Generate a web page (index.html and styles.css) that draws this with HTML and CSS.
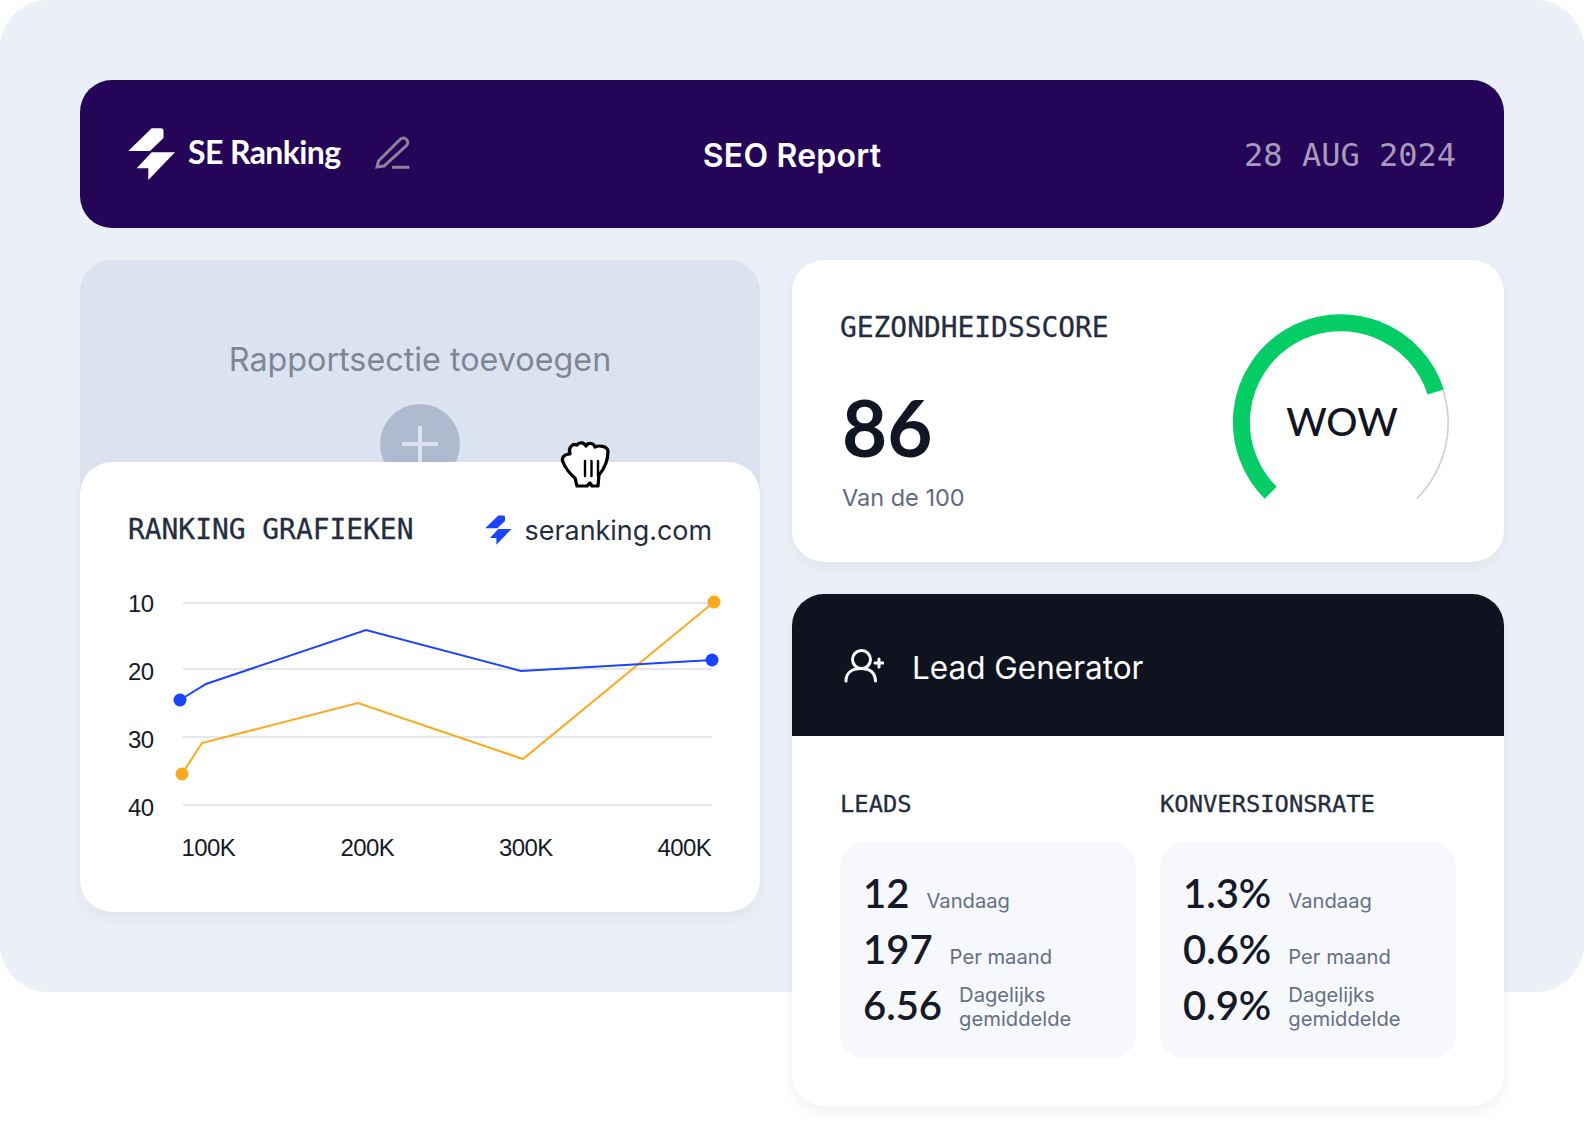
FILE: index.html
```html
<!DOCTYPE html>
<html lang="nl">
<head>
<meta charset="utf-8">
<title>SEO Report</title>
<link rel="stylesheet" href="styles.css">
</head>
<body>
<main class="hero">
  <header class="topbar">
    <div class="brand">
      <svg class="brand-logo" viewBox="128 128 48 52"><path d="M128.3 151 151.7 128.3H161Q163.5 128.3 163.5 131V138L150 151Z"/><path d="M175 152.3 148.3 180V168.3H136.7L151.7 152.3Z"/></svg>
      <span class="brand-name">SE Ranking</span>
      <svg class="pencil" viewBox="0 0 50 46"><path d="M7 37 8.5 31 30 9.5Q33.5 6.5 36.5 9.5 39 12.5 36.5 15.5L14 36Z"/><path d="M22 37.3H39.5" class="pencil-line"/></svg>
    </div>
    <h1 class="report-title">SEO Report</h1>
    <div class="report-date">28 AUG 2024</div>
  </header>
  <div class="columns">
    <section class="left-col">
      <div class="add-panel">
        <p class="add-text">Rapportsectie toevoegen</p>
        <div class="add-btn"><svg viewBox="0 0 36 36"><path d="M18 0V36M0 18H36"/></svg></div>
      </div>
      <div class="rank-card">
        <svg class="grab-cursor" viewBox="0 0 60 54"><path d="M8 24C6 20 9 16 15 16C13 10 17 5 22 7C24 4 29 4 31 8C33 4 39 5 40 9C44 7 52 8 53 13C53 21 50 30 44 37L43 48H37L35 45 32 48H22L20 40C16 37 10 30 8 24Z"/><path class="grab-bars" d="M30 23V38M36.500 23V38M43 23V38"/></svg>
        <div class="rank-head">
          <h2 class="mono-title">RANKING GRAFIEKEN</h2>
          <div class="domain">
            <svg class="domain-logo" viewBox="128 128 48 52"><path d="M128.3 151 151.7 128.3H161Q163.5 128.3 163.5 131V138L150 151Z"/><path d="M175 152.3 148.3 180V168.3H136.7L151.7 152.3Z"/></svg>
            <span>seranking.com</span>
          </div>
        </div>
        <svg class="chart" viewBox="128 590 600 280">
          <g class="grid-lines">
            <path d="M183 603H712M183 669H712M183 737H712M183 805H712"/>
          </g>
          <g class="axis-text">
            <text x="128" y="612">10</text>
            <text x="128" y="680">20</text>
            <text x="128" y="748">30</text>
            <text x="128" y="816">40</text>
            <text x="181.500" y="856">100K</text>
            <text x="340.500" y="856">200K</text>
            <text x="499" y="856">300K</text>
            <text x="657.500" y="856">400K</text>
          </g>
          <polyline class="line-orange" points="182,774 202,743 358,703 523,759 714,602"/>
          <polyline class="line-blue" points="180,700 206,684 366,630 521,671 712,660"/>
          <circle class="dot-orange" cx="182" cy="774" r="6.5"/>
          <circle class="dot-orange" cx="714" cy="602" r="6.5"/>
          <circle class="dot-blue" cx="180" cy="700" r="6.5"/>
          <circle class="dot-blue" cx="712" cy="660" r="6.5"/>
        </svg>
      </div>
    </section>
    <section class="right-col">
      <div class="score-card">
        <div class="score-info">
          <h2 class="mono-title">GEZONDHEIDSSCORE</h2>
          <div class="score-num">86</div>
          <div class="score-sub">Van de 100</div>
        </div>
        <div class="gauge">
          <svg viewBox="1230 310 224 192">
            <path class="gauge-track" d="M1443 389A107.5 107.5 0 0 1 1416.7 497.7"/>
            <path class="gauge-value" d="M1270.7 491.7A99.5 99.5 0 1 1 1435.7 391"/>
          </svg>
          <span class="gauge-label">WOW</span>
        </div>
      </div>
      <div class="lead-card">
        <div class="lead-head">
          <svg class="lead-icon" viewBox="844 648 40 36"><circle cx="861.5" cy="660.5" r="9"/><path d="M846 682C846 673 853 669.5 861 669.5S875 673 875.5 682"/><path class="lead-plus" d="M875 664H883M879 660V668"/></svg>
          <h2 class="lead-title">Lead Generator</h2>
        </div>
        <div class="lead-body">
          <div class="stat-col">
            <h3 class="mono-small">LEADS</h3>
            <div class="stat-box">
              <div class="stat-row"><span class="stat-num">12</span><span class="stat-label">Vandaag</span></div>
              <div class="stat-row"><span class="stat-num">197</span><span class="stat-label">Per maand</span></div>
              <div class="stat-row stat-row-center"><span class="stat-num">6.56</span><span class="stat-label">Dagelijks<br>gemiddelde</span></div>
            </div>
          </div>
          <div class="stat-col">
            <h3 class="mono-small">KONVERSIONSRATE</h3>
            <div class="stat-box">
              <div class="stat-row"><span class="stat-num">1.3%</span><span class="stat-label">Vandaag</span></div>
              <div class="stat-row"><span class="stat-num">0.6%</span><span class="stat-label">Per maand</span></div>
              <div class="stat-row stat-row-center"><span class="stat-num">0.9%</span><span class="stat-label">Dagelijks<br>gemiddelde</span></div>
            </div>
          </div>
        </div>
      </div>
    </section>
  </div>
</main>
</body>
</html>
```
FILE: styles.css
```css
* { box-sizing: border-box; }
html, body { margin: 0; padding: 0; }
body {
  width: 1584px;
  height: 1130px;
  overflow: hidden;
  background: #fff;
  font-family: "Inter", "Liberation Sans", sans-serif;
  color: #111625;
}
h1, h2, h3, p { margin: 0; font-weight: 400; }

.hero {
  height: 992px;
  padding: 80px;
  background: #ebf0f8;
  border-radius: 48px;
}

.topbar {
  display: grid;
  grid-template-columns: 1fr auto 1fr;
  align-items: center;
  height: 148px;
  padding: 0 48px;
  margin-bottom: 32px;
  background: #240558;
  border-radius: 32px;
}
.brand { display: flex; align-items: center; }
.brand-logo { width: 48px; height: 52px; fill: #fff; }
.brand-name {
  width: 156px;
  margin: -5px 0 0 12px;
  color: #fff;
  font-family: "Lato", sans-serif;
  font-size: 32px;
  font-weight: 700;
  letter-spacing: -0.6px;
  white-space: nowrap;
}
.pencil {
  width: 50px;
  height: 46px;
  margin: -2px 0 0 26px;
  fill: none;
  stroke: #8c8299;
  stroke-width: 3;
}
.pencil-line { stroke-width: 3; }
.report-title {
  margin-top: 2px;
  color: #fff;
  font-size: 32px;
  font-weight: 600;
  letter-spacing: 0.2px;
}
.report-date {
  justify-self: end;
  margin-top: 2px;
  color: #a79bba;
  font-family: "DejaVu Sans Mono", monospace;
  font-size: 32px;
}

.columns {
  display: grid;
  grid-template-columns: 680px 712px;
  gap: 32px;
  align-items: start;
}

.add-panel {
  height: 300px;
  padding-top: 78px;
  background: #dce3f0;
  border-radius: 32px;
  text-align: center;
}
.add-text { color: #7f8797; font-size: 32.3px; line-height: 44px; }
.add-btn {
  display: flex;
  align-items: center;
  justify-content: center;
  width: 80px;
  height: 80px;
  margin: 22px auto 0;
  background: #aebacd;
  border-radius: 50%;
}
.add-btn svg { width: 36px; height: 36px; fill: none; stroke: #dce3f0; stroke-width: 4; }

.rank-card {
  position: relative;
  height: 450px;
  margin-top: -98px;
  padding: 48px 48px 0;
  background: #fff;
  border-radius: 32px;
  box-shadow: 0 6px 14px rgba(30, 40, 70, 0.06);
}
.grab-cursor {
  position: absolute;
  left: 475px;
  top: -24px;
  width: 60px;
  height: 54px;
  fill: #fff;
  stroke: #000;
  stroke-width: 3.2;
  stroke-linejoin: round;
  stroke-linecap: round;
}
.grab-bars { stroke-width: 2.4; }
.rank-head {
  display: flex;
  align-items: center;
  justify-content: space-between;
  height: 40px;
}
.mono-title {
  color: #252d40;
  font-family: "DejaVu Sans Mono", monospace;
  font-size: 27.9px;
  line-height: 40px;
  -webkit-text-stroke: 0.3px #252d40;
}
.domain {
  display: flex;
  align-items: center;
  gap: 13px;
  color: #252d40;
  font-size: 26.9px;
}
.domain-logo { width: 27px; height: 30px; fill: #1b44ff; }
.chart { display: block; width: 600px; height: 280px; margin: 40px 0 0; }
.grid-lines path { fill: none; stroke: #e6e7ea; stroke-width: 2; }
.axis-text text { fill: #151a28; font-family: "Liberation Sans", sans-serif; font-size: 24px; letter-spacing: -0.6px; }
.line-blue, .line-orange { fill: none; stroke-width: 2; }
.line-blue { stroke: #1b44ff; }
.line-orange { stroke: #fba91f; }
.dot-blue { fill: #1b44ff; }
.dot-orange { fill: #fba91f; }

.score-card {
  position: relative;
  display: flex;
  justify-content: space-between;
  height: 302px;
  padding: 48px;
  background: #fff;
  border-radius: 32px;
  box-shadow: 0 6px 14px rgba(30, 40, 70, 0.06);
}
.score-num {
  margin: 37px 0 0 2px;
  font-family: "Lato", sans-serif;
  font-size: 78px;
  line-height: 84px;
  font-weight: 700;
}
.score-sub {
  margin: 13px 0 0 2px;
  color: #5f6a80;
  font-size: 23.5px;
  line-height: 32px;
}
.gauge {
  position: relative;
  width: 224px;
  height: 192px;
  margin: 3px 2px 0 0;
}
.gauge svg { display: block; width: 224px; height: 192px; }
.gauge-track { fill: none; stroke: #c9cdd8; stroke-width: 1.5; }
.gauge-value { fill: none; stroke: #04cd66; stroke-width: 17; }
.gauge-label {
  position: absolute;
  left: 0;
  right: 0;
  top: 86px;
  text-align: center;
  font-family: "Lato", sans-serif;
  font-size: 39px;
  font-weight: 500;
  line-height: 48px;
  color: #111625;
}

.lead-card {
  height: 512px;
  margin-top: 32px;
  background: #fff;
  border-radius: 32px;
  overflow: hidden;
  box-shadow: 0 6px 14px rgba(30, 40, 70, 0.06);
}
.lead-head {
  display: flex;
  align-items: center;
  gap: 28px;
  height: 142px;
  padding: 0 52px;
  background: #0f1320;
}
.lead-icon { width: 40px; height: 36px; fill: none; stroke: #fff; stroke-width: 3; stroke-linecap: round; }
.lead-title { margin-top: 4px; color: #fff; font-size: 31.5px; }
.lead-body {
  display: grid;
  grid-template-columns: 296px 296px;
  gap: 24px;
  padding: 52px 48px 0;
}
.mono-small {
  color: #252d40;
  font-family: "DejaVu Sans Mono", monospace;
  font-size: 23.8px;
  line-height: 32px;
  -webkit-text-stroke: 0.3px #252d40;
}
.stat-box {
  display: flex;
  flex-direction: column;
  gap: 8px;
  height: 216px;
  margin-top: 22px;
  padding: 27px 23px 0;
  background: #f6f8fc;
  border-radius: 24px;
}
.stat-row { display: flex; align-items: baseline; gap: 17px; height: 48px; }
.stat-row-center { align-items: center; }
.stat-row-center .stat-label { padding-top: 4px; }
.stat-num { font-family: "Lato", sans-serif; font-size: 40px; line-height: 48px; font-weight: 600; color: #151a28; }
.stat-label { color: #657084; font-size: 20.2px; line-height: 24px; }
```
